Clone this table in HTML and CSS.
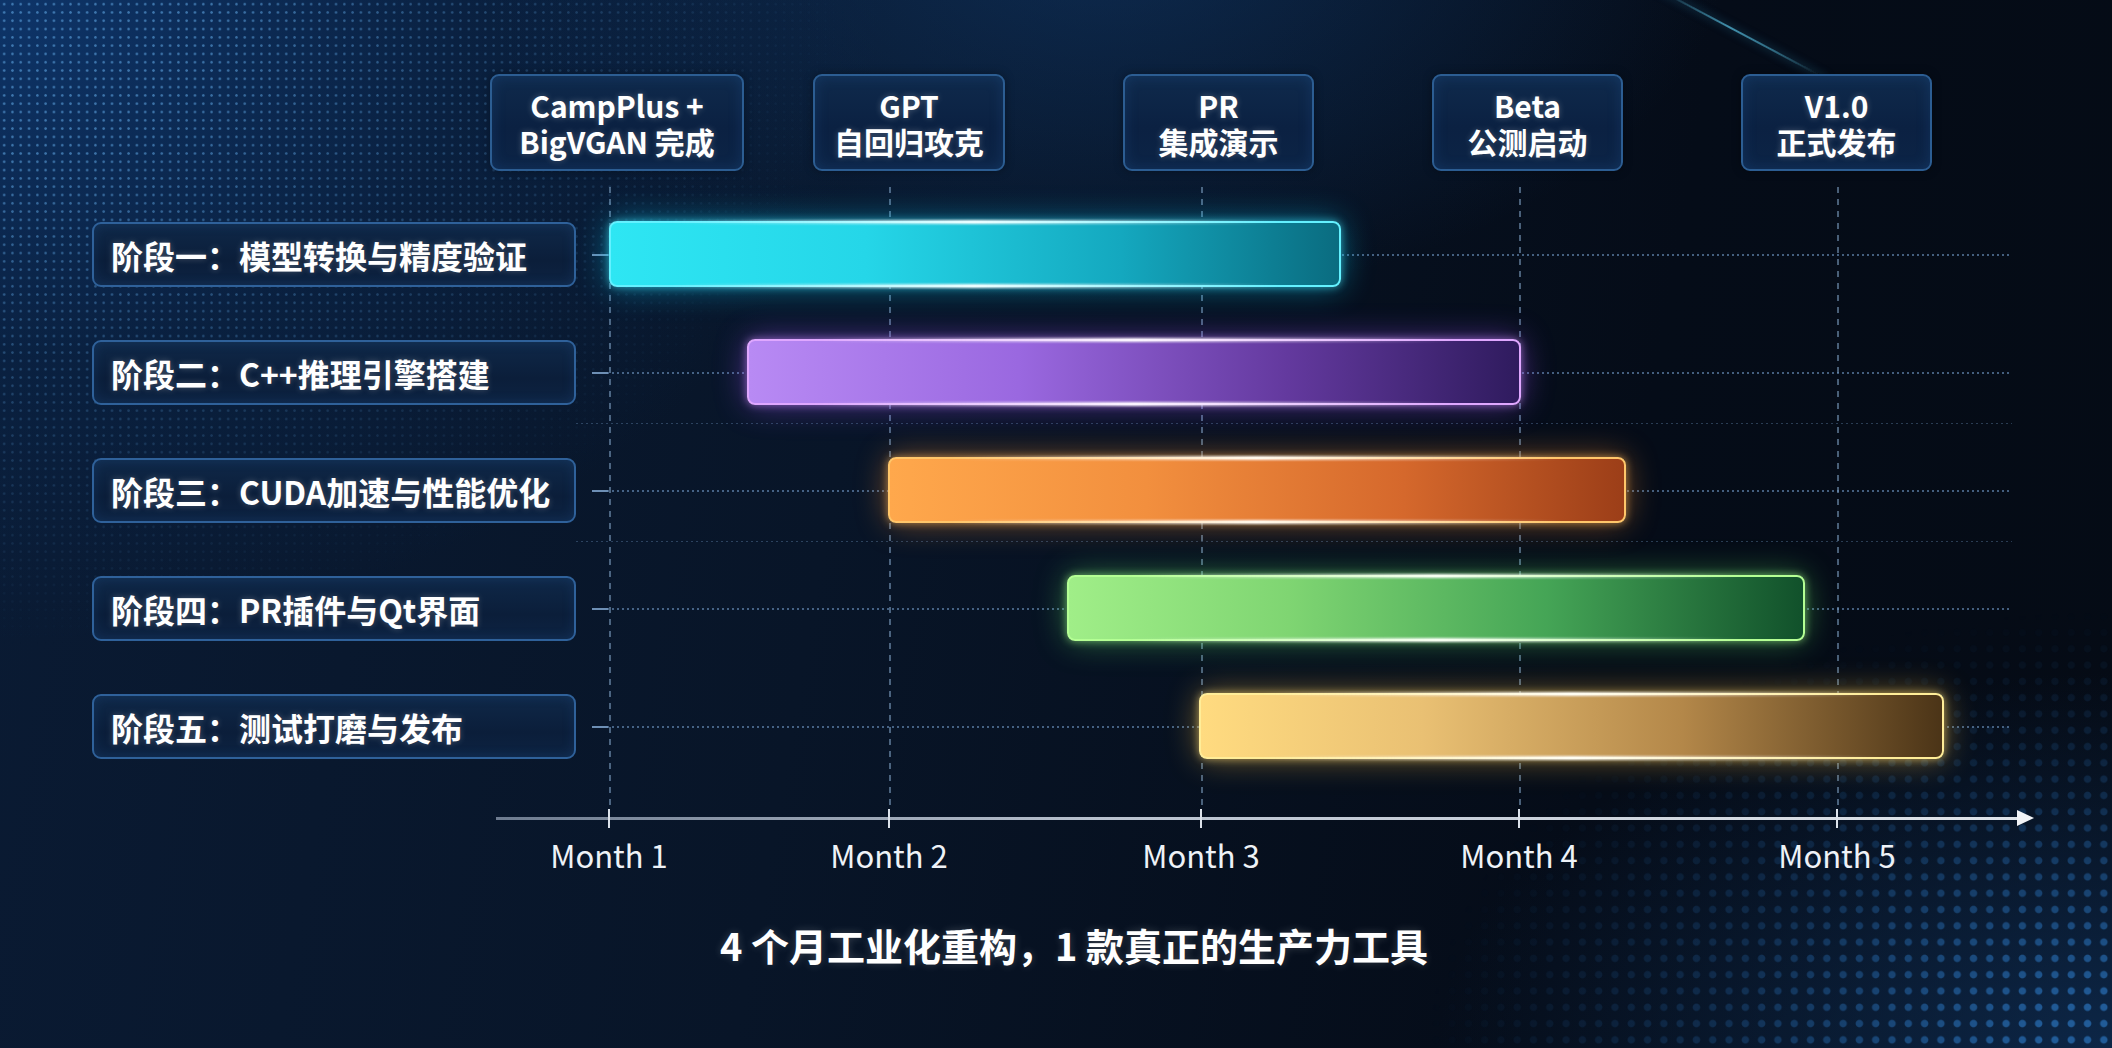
FILE: index.html
```html
<!DOCTYPE html>
<html lang="zh-CN">
<head>
<meta charset="utf-8">
<title>Roadmap</title>
<link rel="stylesheet" href="styles.css">
</head>
<body>
<div class="slide">
  <div class="bg-dots"></div>
  <div class="bg-halftone"></div>
  <div class="bg-streak"></div>

  <div class="milestones">
    <div class="ms wide"><span class="ln">CampPlus +</span><span class="ln">BigVGAN 完成</span></div>
    <div class="ms"><span class="ln">GPT</span><span class="ln">自回归攻克</span></div>
    <div class="ms"><span class="ln">PR</span><span class="ln">集成演示</span></div>
    <div class="ms"><span class="ln">Beta</span><span class="ln">公测启动</span></div>
    <div class="ms"><span class="ln">V1.0</span><span class="ln">正式发布</span></div>
  </div>

  <div class="plot">
    <div class="gridlines">
      <span class="vline" style="left:609px"></span>
      <span class="vline" style="left:889px"></span>
      <span class="vline" style="left:1201px"></span>
      <span class="vline" style="left:1519px"></span>
      <span class="vline" style="left:1837px"></span>
    </div>

    <div class="row">
      <div class="phase">阶段一：模型转换与精度验证</div>
      <div class="track"><div class="bar cyan" style="margin-left:33px;width:732px"></div></div>
    </div>
    <div class="row mid">
      <div class="phase">阶段二：C++推理引擎搭建</div>
      <div class="track"><div class="bar purple" style="margin-left:171px;width:774px"></div></div>
    </div>
    <div class="row mid">
      <div class="phase">阶段三：CUDA加速与性能优化</div>
      <div class="track"><div class="bar orange" style="margin-left:312px;width:738px"></div></div>
    </div>
    <div class="row">
      <div class="phase">阶段四：PR插件与Qt界面</div>
      <div class="track"><div class="bar green" style="margin-left:491px;width:738px"></div></div>
    </div>
    <div class="row">
      <div class="phase">阶段五：测试打磨与发布</div>
      <div class="track"><div class="bar gold" style="margin-left:623px;width:745px"></div></div>
    </div>

    <div class="axis">
      <span class="tick" style="left:113px"></span>
      <span class="tick" style="left:393px"></span>
      <span class="tick" style="left:705px"></span>
      <span class="tick" style="left:1023px"></span>
      <span class="tick" style="left:1341px"></span>
      <span class="month" style="left:113px">Month 1</span>
      <span class="month" style="left:393px">Month 2</span>
      <span class="month" style="left:705px">Month 3</span>
      <span class="month" style="left:1023px">Month 4</span>
      <span class="month" style="left:1341px">Month 5</span>
    </div>
  </div>

  <div class="caption">4 个月工业化重构，1 款真正的生产力工具</div>
</div>
</body>
</html>
```

FILE: styles.css
```css
html, body {
  margin: 0;
  padding: 0;
  background: #06101e;
}

.slide {
  position: relative;
  width: 2112px;
  height: 1048px;
  overflow: hidden;
  box-sizing: border-box;
  padding-top: 74px;
  font-family: "Noto Sans CJK SC", "Noto Sans", "DejaVu Sans", sans-serif;
  color: #ffffff;
  background:
    radial-gradient(ellipse 900px 520px at 1100px -60px, rgba(20, 70, 130, 0.45), rgba(20, 70, 130, 0) 70%),
    radial-gradient(ellipse 1100px 800px at 0px 0px, rgba(14, 54, 108, 0.95), rgba(10, 38, 76, 0.55) 45%, rgba(8, 22, 44, 0) 80%),
    radial-gradient(ellipse 900px 500px at 2112px 1048px, rgba(16, 50, 92, 0.7), rgba(16, 50, 92, 0) 75%),
    linear-gradient(100deg, #0a1b34 0%, #081528 40%, #050c18 75%, #050b15 100%);
}

/* background decorations */
.bg-dots {
  position: absolute;
  left: 0;
  top: 0;
  width: 1100px;
  height: 900px;
  background-image: radial-gradient(circle, rgba(95, 165, 225, 0.6) 0.9px, rgba(95, 165, 225, 0) 1.6px);
  background-size: 8.3px 8.3px;
  -webkit-mask-image: radial-gradient(ellipse 1000px 760px at 0 0, #000 20%, rgba(0, 0, 0, 0.4) 55%, transparent 85%);
  mask-image: radial-gradient(ellipse 1000px 760px at 0 0, #000 20%, rgba(0, 0, 0, 0.4) 55%, transparent 85%);
  pointer-events: none;
}

.bg-halftone {
  position: absolute;
  right: 0;
  bottom: 0;
  width: 760px;
  height: 520px;
  background-image: radial-gradient(circle, rgba(40, 110, 180, 0.75) 3.2px, rgba(40, 110, 180, 0) 4.2px);
  background-size: 16.3px 16.3px;
  background-position: right bottom;
  -webkit-mask-image: radial-gradient(ellipse 720px 460px at 100% 100%, #000 10%, rgba(0, 0, 0, 0.35) 55%, transparent 95%);
  mask-image: radial-gradient(ellipse 720px 460px at 100% 100%, #000 10%, rgba(0, 0, 0, 0.35) 55%, transparent 95%);
  pointer-events: none;
}

.bg-streak {
  position: absolute;
  left: 1650px;
  top: -16px;
  width: 200px;
  height: 2px;
  transform: rotate(28deg);
  transform-origin: left center;
  background: linear-gradient(90deg, rgba(70, 190, 230, 0), rgba(90, 200, 235, 0.7) 45%, rgba(90, 200, 235, 0.5) 70%, rgba(70, 190, 230, 0));
  box-shadow: 0 0 8px rgba(60, 170, 220, 0.5);
  pointer-events: none;
}

/* milestone boxes */
.milestones {
  position: relative;
  display: flex;
  padding-left: 490px;
  height: 97px;
}

.ms {
  box-sizing: border-box;
  width: 191px;
  height: 97px;
  margin-left: 118px;
  border: 2px solid #2c5d92;
  border-radius: 9px;
  background: linear-gradient(180deg, #0f2a4c 0%, #0b2142 55%, #0c2446 100%);
  box-shadow: inset 0 0 14px rgba(40, 100, 170, 0.25), 0 0 10px rgba(0, 0, 0, 0.35);
  display: flex;
  flex-direction: column;
  align-items: center;
  justify-content: center;
  text-align: center;
  font-size: 30px;
  font-weight: 700;
  text-shadow: 0 0 6px rgba(255, 255, 255, 0.25);
}

.ms .ln {
  display: block;
  height: 36px;
  line-height: 36px;
  white-space: nowrap;
}

.ms.wide {
  width: 254px;
  margin-left: 0;
}

.ms:nth-child(2) {
  margin-left: 69px;
  width: 192px;
}

/* plot */
.plot {
  position: relative;
  margin-top: 51px;
  padding-left: 92px;
  display: flex;
  flex-direction: column;
  gap: 53px;
}

.gridlines {
  position: absolute;
  left: 0;
  top: -35px;
  width: 100%;
  height: 622px;
  pointer-events: none;
}

.vline {
  position: absolute;
  top: 0;
  bottom: 0;
  width: 1.5px;
  background-image: linear-gradient(180deg, rgba(130, 165, 200, 0.55) 0 50%, rgba(130, 165, 200, 0) 50% 100%);
  background-size: 1.5px 12px;
}

.row {
  position: relative;
  display: flex;
  height: 65px;
}

.phase {
  box-sizing: border-box;
  flex: 0 0 484px;
  height: 65px;
  padding-left: 17px;
  display: flex;
  align-items: center;
  border: 2px solid #2f619a;
  border-radius: 9px;
  background: linear-gradient(180deg, #0f2848 0%, #0b1e3a 60%, #0d2342 100%);
  box-shadow: inset 0 0 12px rgba(40, 100, 170, 0.22);
  font-size: 32px;
  font-weight: 700;
  white-space: nowrap;
  text-shadow: 0 0 6px rgba(255, 255, 255, 0.25);
}

.track {
  position: relative;
  flex: 1;
  height: 65px;
}

/* dotted row guide */
.track::before {
  content: "";
  position: absolute;
  left: 31px;
  width: 1405px;
  top: 32px;
  height: 2px;
  background-image: linear-gradient(90deg, rgba(110, 150, 195, 0.6) 0 50%, rgba(110, 150, 195, 0) 50% 100%);
  background-size: 5px 2px;
}

/* short solid tick next to label */
.track::after {
  content: "";
  position: absolute;
  left: 16px;
  width: 16px;
  top: 32px;
  height: 2px;
  background: #6d8fb5;
}

.row.mid::after {
  content: "";
  position: absolute;
  left: 484px;
  width: 1436px;
  bottom: -19px;
  height: 1px;
  background-image: linear-gradient(90deg, rgba(110, 150, 195, 0.35) 0 50%, rgba(110, 150, 195, 0) 50% 100%);
  background-size: 5px 1px;
}

.bar {
  position: relative;
  z-index: 2;
  box-sizing: border-box;
  height: 66px;
  margin-top: -1px;
  border-radius: 8px;
  border: 2px solid;
}

.bar::before,
.bar::after {
  content: "";
  position: absolute;
  left: 8%;
  right: 8%;
  height: 4px;
  border-radius: 2px;
  background: linear-gradient(90deg, rgba(255, 255, 255, 0), rgba(255, 255, 255, 0.55) 30%, rgba(255, 255, 255, 0.95) 50%, rgba(255, 255, 255, 0.55) 70%, rgba(255, 255, 255, 0));
  filter: blur(1px);
}

.bar::before { top: -3px; }
.bar::after { bottom: -3px; }

.bar.cyan {
  border-color: #63f1ff;
  background: linear-gradient(90deg, #2ee6f3 0%, #25d6e8 35%, #14a8bf 70%, #0a6c80 100%);
  box-shadow: 0 0 32px rgba(0, 210, 255, 0.45), 0 0 8px rgba(90, 240, 255, 0.6);
}

.bar.purple {
  border-color: #dfa7ff;
  background: linear-gradient(90deg, #b88af4 0%, #9a68e0 35%, #63399e 70%, #2f1b5e 100%);
  box-shadow: 0 0 32px rgba(160, 80, 255, 0.45), 0 0 8px rgba(220, 160, 255, 0.6);
}

.bar.orange {
  border-color: #ffc66a;
  background: linear-gradient(90deg, #ffa84c 0%, #f28f3e 35%, #d5682c 70%, #9c3e18 100%);
  box-shadow: 0 0 32px rgba(255, 140, 40, 0.45), 0 0 8px rgba(255, 200, 110, 0.6);
}

.bar.green {
  border-color: #b4ff94;
  background: linear-gradient(90deg, #a0ee88 0%, #7fd572 30%, #45a556 65%, #11512b 100%);
  box-shadow: 0 0 32px rgba(90, 230, 100, 0.42), 0 0 8px rgba(180, 255, 150, 0.6);
}

.bar.gold {
  border-color: #ffed98;
  background: linear-gradient(90deg, #ffdb80 0%, #e9c073 30%, #b38749 65%, #4b3417 100%);
  box-shadow: 0 0 32px rgba(255, 190, 60, 0.45), 0 0 8px rgba(255, 230, 140, 0.6);
}

/* axis */
.axis {
  position: relative;
  margin-top: 5px;
  margin-left: 404px;
  width: 1522px;
  height: 3px;
  background: linear-gradient(90deg, #6e7c90 0%, #b9c2cf 40%, #dfe4ea 100%);
}

.axis::after {
  content: "";
  position: absolute;
  right: -16px;
  top: -7px;
  width: 0;
  height: 0;
  border-top: 8.5px solid transparent;
  border-bottom: 8.5px solid transparent;
  border-left: 17px solid #f2f4f7;
}

.tick {
  position: absolute;
  top: -8px;
  width: 2px;
  height: 19px;
  margin-left: -1px;
  background: #dce2ea;
}

.month {
  position: absolute;
  top: 20px;
  transform: translateX(-50%);
  font-size: 31px;
  line-height: 36px;
  font-weight: 400;
  color: #eef2f7;
  white-space: nowrap;
}

.caption {
  position: relative;
  margin-top: 101px;
  padding-left: 36px;
  text-align: center;
  font-size: 38px;
  line-height: 48px;
  font-weight: 700;
  color: #ffffff;
  text-shadow: 0 0 8px rgba(255, 255, 255, 0.2);
}
```
